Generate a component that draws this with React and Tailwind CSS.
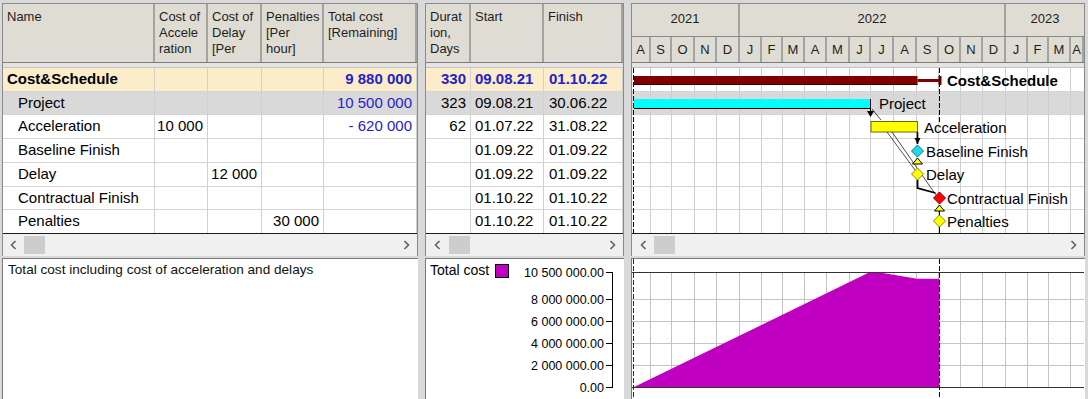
import React from "react";

const FONT = "font-['Liberation_Sans',Arial,sans-serif]";
const SVG_FONT = "'Liberation Sans', Arial, sans-serif";

// timeline scale: px per day, local x of 1 Jan 2022
const DAY = 0.7292;
const JAN22 = 107.5;
const W = 452;
const xOf = (y, m, d = 1) =>
  JAN22 + ((Date.UTC(y, m, d) - Date.UTC(2022, 0, 1)) / 86400000) * DAY;

const months = [];
for (let i = 0; i < 21; i++) {
  const y = 2021 + Math.floor((7 + i) / 12);
  const m = (7 + i) % 12;
  const a = Math.max(0, Math.round(xOf(y, m)));
  const b = Math.min(W, Math.round(xOf(y, m + 1)));
  months.push({ key: `${y}-${m}`, label: "JFMAMJJASOND"[m], w: b - a, end: b });
}
const y2022 = Math.round(xOf(2022, 0));
const y2023 = Math.round(xOf(2023, 0));

const rows = [
  { name: "Cost&Schedule", summary: true, total: "9 880 000", dur: "330", start: "09.08.21", finish: "01.10.22", h: "h-[24px]", bg: "bg-[#fbecca]" },
  { name: "Project", total: "10 500 000", dur: "323", start: "09.08.21", finish: "30.06.22", h: "h-[23px]", bg: "bg-[#d9d9d9]" },
  { name: "Acceleration", accel: "10 000", total: "- 620 000", dur: "62", start: "01.07.22", finish: "31.08.22", h: "h-[24px]" },
  { name: "Baseline Finish", start: "01.09.22", finish: "01.09.22", h: "h-[24px]" },
  { name: "Delay", delay: "12 000", start: "01.09.22", finish: "01.09.22", h: "h-[24px]" },
  { name: "Contractual Finish", start: "01.10.22", finish: "01.10.22", h: "h-[23px]" },
  { name: "Penalties", pen: "30 000", start: "01.10.22", finish: "01.10.22", h: "h-[24px]", last: true },
];
// local row tops in the gantt body
const rowTops = [0, 24, 47, 71, 95, 119, 142, 166];

const Head = ({ w, children }) => (
  <div className={`${w} h-full shrink-0 overflow-hidden whitespace-nowrap pl-[4px] pt-[5px] text-[13px] leading-[16px] text-[#1e1e1e] border-r-2 border-r-[#a3a3a3]`}>
    {children}
  </div>
);

const Cell = ({ w, right, className = "", children }) => (
  <div
    className={`${w} h-full shrink-0 flex items-center overflow-hidden whitespace-nowrap border-r border-r-[#d0d0d0] ${right ? "justify-end pr-[4px]" : "pl-[4px]"} ${className}`}
  >
    {children}
  </div>
);

const Row = ({ r, children }) => (
  <div
    className={`flex ${r.h} ${r.bg || "bg-white"} border-b ${r.last ? "border-b-[#1a1a1a]" : "border-b-[#d4d4d4]"} text-[15px] text-black`}
  >
    {children}
  </div>
);

const Chev = ({ left }) => (
  <svg width="7" height="10" viewBox="0 0 7 10">
    <polyline
      points={left ? "5.5,1 1.5,5 5.5,9" : "1.5,1 5.5,5 1.5,9"}
      fill="none"
      stroke="#606060"
      strokeWidth="1.6"
    />
  </svg>
);

const Scroll = ({ first }) => (
  <div className="h-[22px] bg-[#f0f0f0] flex items-center">
    <div className={`${first} flex justify-center`}>
      <Chev left />
    </div>
    <div className="w-[21px] h-[18px] bg-[#cdcdcd]" />
    <div className="flex-1" />
    <div className="w-[21px] flex justify-center">
      <Chev />
    </div>
  </div>
);

const Diamond = ({ x, y, fill, stroke }) => (
  <polygon points={`${x},${y - 6} ${x + 6},${y} ${x},${y + 6} ${x - 6},${y}`} fill={fill} stroke={stroke} strokeWidth="1" />
);

const Tri = ({ x, y }) => (
  <polygon points={`${x - 5},${y + 3} ${x},${y - 3} ${x + 5},${y + 3}`} fill="#ffff00" stroke="#000" strokeWidth="1" />
);

const GanttBody = () => {
  const bx = Math.round(xOf(2022, 8)) + 0.5; // 1 Sep 22
  const cx = Math.round(xOf(2022, 9)) + 0.5; // 1 Oct 22
  const px = Math.round(xOf(2022, 6)); // 1 Jul 22
  return (
    <svg width={W} height="166" className="block" fontFamily={SVG_FONT}>
      <rect x="0" y="0" width={W} height="166" fill="#fff" />
      <rect x="0" y="24" width={W} height="23" fill="#d9d9d9" />
      {months.slice(0, -1).map((m) => (
        <line key={m.key} x1={m.end - 0.5} y1="0" x2={m.end - 0.5} y2="166" stroke="#cfcfcf" />
      ))}
      {rowTops.slice(1, -1).map((t) => (
        <line key={t} x1="0" y1={t - 0.5} x2={W} y2={t - 0.5} stroke="#d4d4d4" />
      ))}
      <line x1="0" y1="165.5" x2={W} y2="165.5" stroke="#1a1a1a" />
      <line x1="1.5" y1="0" x2="1.5" y2="166" stroke="#000" strokeDasharray="5 2" />
      <line x1={cx} y1="0" x2={cx} y2="56" stroke="#000" strokeDasharray="5 2" />

      {/* summary */}
      <rect x="2" y="8" width={bx - 2} height="9" fill="#800000" />
      <line x1="2" y1="16.5" x2={bx} y2="16.5" stroke="#3a0000" />
      <rect x={bx} y="11" width={cx - bx} height="3" fill="#800000" />
      <rect x={cx - 1} y="8" width="3" height="9" fill="#600000" />
      <text x="315" y="18" fontSize="15" fontWeight="bold" fill="#000">Cost&amp;Schedule</text>

      {/* project */}
      <rect x="2" y="31" width={px - 2} height="9" fill="#00ffff" />
      <line x1="2" y1="40.5" x2={px} y2="40.5" stroke="#000" />
      <line x1={px - 0.5} y1="31" x2={px - 0.5} y2="46" stroke="#000" />
      <polygon points={`${px - 4},${43} ${px + 3},${43} ${px - 0.5},${49}`} fill="#000" />
      <line x1={px + 1} y1="41" x2={px + 10} y2="52" stroke="#000" strokeWidth="0.7" />
      <text x="247" y="41" fontSize="15" fill="#000">Project</text>

      {/* acceleration */}
      <rect x={px} y="53.5" width={bx - px} height="10.5" fill="#ffff00" stroke="#6b6b00" strokeWidth="1" />
      <text x="292" y="65" fontSize="15" fill="#000">Acceleration</text>
      <line x1="255" y1="64" x2="283" y2="102" stroke="#222" strokeWidth="0.8" />
      <line x1="260" y1="64" x2="304" y2="127" stroke="#222" strokeWidth="0.8" />
      <line x1={bx} y1="64" x2={bx} y2="76" stroke="#000" strokeWidth="1.6" />
      <polygon points={`${bx - 3},${70} ${bx + 3},${70} ${bx},${76}`} fill="#000" />

      {/* milestones */}
      <Diamond x={bx} y={83} fill="#22d8e8" stroke="#007f8c" />
      <text x="294" y="88.5" fontSize="15" fill="#000">Baseline Finish</text>
      <Tri x={bx} y={93} />
      <Diamond x={bx} y={106} fill="#ffff00" stroke="#8a8a00" />
      <text x="294" y="112" fontSize="15" fill="#000">Delay</text>
      <polyline points={`${bx},112 ${bx},120 ${cx - 4},125`} fill="none" stroke="#000" strokeWidth="1.8" />
      <Diamond x={cx} y={130} fill="#ff0000" stroke="#800000" />
      <text x="315" y="135.5" fontSize="15" fill="#000">Contractual Finish</text>
      <Tri x={cx} y={140} />
      <line x1={cx} y1="143" x2={cx} y2="166" stroke="#000" />
      <Diamond x={cx} y={153} fill="#ffff00" stroke="#8a8a00" />
      <text x="315" y="158.5" fontSize="15" fill="#000">Penalties</text>
    </svg>
  );
};

const Y = (v) => 128 - (v / 1e6) * 10.95;
const ticks = [
  [10.5e6, "10 500 000.00"],
  [8e6, "8 000 000.00"],
  [6e6, "6 000 000.00"],
  [4e6, "4 000 000.00"],
  [2e6, "2 000 000.00"],
  [0, "0.00"],
];

const CostAxis = () => (
  <svg width="197" height="140" className="block" fontFamily={SVG_FONT}>
    <text x="4" y="16" fontSize="14" fill="#000">Total cost</text>
    <rect x="69.5" y="5.5" width="13" height="13" fill="#c000c0" stroke="#000" />
    {ticks.map(([v, t]) => (
      <g key={t}>
        <text x="178" y={Y(v) + 4.5} fontSize="12.5" textAnchor="end" fill="#000">{t}</text>
        <line x1="180" y1={Math.round(Y(v)) + 0.5} x2="187" y2={Math.round(Y(v)) + 0.5} stroke="#000" />
      </g>
    ))}
    <line x1="186.5" y1={Math.round(Y(10.5e6))} x2="186.5" y2={Math.round(Y(0)) + 1} stroke="#000" />
  </svg>
);

const CostChart = () => {
  const px = Math.round(xOf(2022, 6));
  const bx = Math.round(xOf(2022, 8));
  const cx = Math.round(xOf(2022, 9)) + 0.5;
  const top = Math.round(Y(10.5e6));
  const bottom = Math.round(Y(0));
  const pts = [
    [2, Y(0)],
    [px - 1, Y(10.5e6)],
    [px + 6, Y(10.5e6)],
    [bx, Y(9.88e6)],
    [cx, Y(9.88e6)],
    [cx, Y(0)],
  ];
  return (
    <svg width={W} height="140" className="block" shapeRendering="crispEdges">
      <rect x="0" y="0" width={W} height="140" fill="#fff" />
      {months.slice(0, -1).map((m) => (
        <rect key={m.key} x={m.end - 1} y={top} width="1" height={bottom - top} fill="#c4c4c4" />
      ))}
      {[8e6, 6e6, 4e6, 2e6].map((v) => (
        <rect key={v} x="0" y={Math.round(Y(v))} width={W} height="1" fill="#c4c4c4" />
      ))}
      <polygon points={pts.map((p) => p.join(",")).join(" ")} fill="#c000c0" shapeRendering="auto" />
      <rect x="0" y={top} width={W} height="1" fill="#333" />
      <rect x="0" y={bottom} width={W} height="1" fill="#333" />
      <line x1="1.5" y1="0" x2="1.5" y2="140" stroke="#8b0000" strokeDasharray="5 2" />
      <line x1={cx} y1="0" x2={cx} y2="140" stroke="#000" strokeDasharray="5 2" />
    </svg>
  );
};

export default function App() {
  return (
    <div className={`w-[1088px] h-[399px] overflow-hidden bg-[#d9d9d9] flex gap-[7px] pt-[3px] pl-[2px] ${FONT}`}>
      {/* left: cost table */}
      <div className="w-[416px] shrink-0 h-full flex flex-col">
        <div className="border-t border-l border-r border-[#8a8a8a] bg-[#e4e4e4]">
          <div className="h-[59px] flex bg-[#dedcd3] border-b border-b-[#7a7a7a]">
            <Head w="w-[152px]">Name</Head>
            <Head w="w-[53px]">Cost of<br />Accele<br />ration</Head>
            <Head w="w-[54px]">Cost of<br />Delay<br />[Per</Head>
            <Head w="w-[62px]">Penalties<br />[Per<br />hour]</Head>
            <Head w="flex-1">Total cost<br />[Remaining]</Head>
          </div>
          <div className="h-[4px]" />
          <div className="border-t border-t-[#c4c4c4]">
            {rows.map((r) => (
              <Row key={r.name} r={r}>
                <Cell w="w-[152px]" className={r.summary ? "pl-[0px] font-bold" : "pl-[15px]"}>{r.name}</Cell>
                <Cell w="w-[53px]" right>{r.accel}</Cell>
                <Cell w="w-[54px]" right>{r.delay}</Cell>
                <Cell w="w-[62px]" right>{r.pen}</Cell>
                <Cell w="flex-1" right className={`text-[#2323c8] ${r.summary ? "font-bold" : ""}`}>{r.total}</Cell>
              </Row>
            ))}
          </div>
          <Scroll first="w-[21px]" />
        </div>
        <div className="h-[2px]" />
        <div className="flex-1 bg-white border-t border-l border-[#7a7a7a] pl-[5px] pt-[3px] text-[13.6px] leading-[16px] text-[#111]">
          Total cost including cost of acceleration and delays
        </div>
      </div>

      {/* middle: schedule table */}
      <div className="w-[199px] shrink-0 h-full flex flex-col">
        <div className="border-t border-l border-r border-[#8a8a8a] bg-[#e4e4e4]">
          <div className="h-[59px] flex bg-[#dedcd3] border-b border-b-[#7a7a7a]">
            <Head w="w-[45px]">Durat<br />ion,<br />Days</Head>
            <Head w="w-[73px]">Start</Head>
            <Head w="flex-1">Finish</Head>
          </div>
          <div className="h-[4px]" />
          <div className="border-t border-t-[#c4c4c4]">
            {rows.map((r) => {
              const tone = r.summary ? "text-[#2323c8] font-bold" : "";
              return (
                <Row key={r.name} r={r}>
                  <Cell w="w-[45px]" right className={tone}>{r.dur}</Cell>
                  <Cell w="w-[73px]" className={tone}>{r.start}</Cell>
                  <Cell w="flex-1" className={`pl-[5px] ${tone}`}>{r.finish}</Cell>
                </Row>
              );
            })}
          </div>
          <Scroll first="w-[23px]" />
        </div>
        <div className="h-[2px]" />
        <div className="flex-1 bg-white border-t border-l border-[#7a7a7a]">
          <CostAxis />
        </div>
      </div>

      {/* right: gantt */}
      <div className="w-[454px] shrink-0 h-full flex flex-col">
        <div className="border-t border-l border-r border-[#8a8a8a] bg-[#e4e4e4]">
          <div className="h-[59px] flex flex-col bg-[#dedcd3] border-b border-b-[#7a7a7a] text-[13px] text-[#1e1e1e] overflow-hidden">
            <div className="h-[33px] flex border-b border-b-[#8a8a8a]">
              <div className="shrink-0 flex items-center justify-center pb-[3px] border-r-2 border-r-[#a3a3a3]" style={{ width: y2022 }}>2021</div>
              <div className="shrink-0 flex items-center justify-center pb-[3px] border-r-2 border-r-[#a3a3a3]" style={{ width: y2023 - y2022 }}>2022</div>
              <div className="flex-1 flex items-center justify-center pb-[3px]">2023</div>
            </div>
            <div className="h-[25px] flex">
              {months.map((m) => (
                <div key={m.key} className="shrink-0 flex items-center justify-center overflow-hidden border-r-2 border-r-[#a3a3a3]" style={{ width: m.w }}>
                  {m.label}
                </div>
              ))}
            </div>
          </div>
          <div className="h-[4px]" />
          <div className="border-t border-t-[#c4c4c4]">
            <GanttBody />
          </div>
          <Scroll first="w-[22px]" />
        </div>
        <div className="h-[2px]" />
        <div className="flex-1 bg-white border-t border-l border-[#7a7a7a] overflow-hidden">
          <CostChart />
        </div>
      </div>
    </div>
  );
}
